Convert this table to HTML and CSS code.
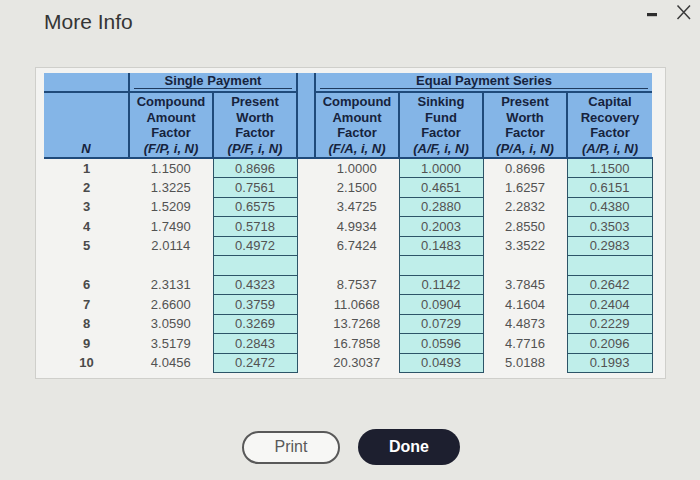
FILE: index.html
```html
<!DOCTYPE html>
<html lang="en">
<head>
<meta charset="utf-8">
<title>More Info</title>
<link rel="stylesheet" href="styles.css">
</head>
<body>
<div class="dialog">
  <header class="titlebar">
    <h1 class="title">More Info</h1>
    <div class="win-controls">
      <svg class="ctrl" width="16" height="16" viewBox="0 0 16 16" aria-label="Minimize"><rect x="2" y="9" width="10" height="3.2" fill="#2e2e2e"/></svg>
      <svg class="ctrl" width="16" height="16" viewBox="0 0 16 16" aria-label="Close"><path d="M1.5 1.5 L14 15 M14 1.5 L1.5 15" stroke="#3a3a3a" stroke-width="1.5" fill="none"/></svg>
    </div>
  </header>

  <div class="panel">
    <table class="factors">
      <colgroup>
        <col class="c-n"><col class="c-w"><col class="c-w"><col class="c-gap"><col class="c-w"><col class="c-w"><col class="c-w"><col class="c-last">
      </colgroup>
      <thead>
        <tr class="h1">
          <th class="hd hd-n"></th>
          <th class="hd group" colspan="2"><span class="group-label">Single Payment</span></th>
          <th class="hd gap" rowspan="2"></th>
          <th class="hd group" colspan="4"><span class="group-label">Equal Payment Series</span></th>
        </tr>
        <tr class="h2">
          <th class="hd sub"><i>N</i></th>
          <th class="hd sub">Compound<br>Amount<br>Factor<br><i>(F/P, i, N)</i></th>
          <th class="hd sub">Present<br>Worth<br>Factor<br><i>(P/F, i, N)</i></th>
          <th class="hd sub">Compound<br>Amount<br>Factor<br><i>(F/A, i, N)</i></th>
          <th class="hd sub">Sinking<br>Fund<br>Factor<br><i>(A/F, i, N)</i></th>
          <th class="hd sub">Present<br>Worth<br>Factor<br><i>(P/A, i, N)</i></th>
          <th class="hd sub">Capital<br>Recovery<br>Factor<br><i>(A/P, i, N)</i></th>
        </tr>
      </thead>
      <tbody>
        <tr><td class="n">1</td><td>1.1500</td><td class="hl">0.8696</td><td></td><td>1.0000</td><td class="hl">1.0000</td><td>0.8696</td><td class="hl">1.1500</td></tr>
        <tr><td class="n">2</td><td>1.3225</td><td class="hl">0.7561</td><td></td><td>2.1500</td><td class="hl">0.4651</td><td>1.6257</td><td class="hl">0.6151</td></tr>
        <tr><td class="n">3</td><td>1.5209</td><td class="hl">0.6575</td><td></td><td>3.4725</td><td class="hl">0.2880</td><td>2.2832</td><td class="hl">0.4380</td></tr>
        <tr><td class="n">4</td><td>1.7490</td><td class="hl">0.5718</td><td></td><td>4.9934</td><td class="hl">0.2003</td><td>2.8550</td><td class="hl">0.3503</td></tr>
        <tr><td class="n">5</td><td>2.0114</td><td class="hl">0.4972</td><td></td><td>6.7424</td><td class="hl">0.1483</td><td>3.3522</td><td class="hl">0.2983</td></tr>
        <tr><td class="n"></td><td></td><td class="hl"></td><td></td><td></td><td class="hl"></td><td></td><td class="hl"></td></tr>
        <tr><td class="n">6</td><td>2.3131</td><td class="hl">0.4323</td><td></td><td>8.7537</td><td class="hl">0.1142</td><td>3.7845</td><td class="hl">0.2642</td></tr>
        <tr><td class="n">7</td><td>2.6600</td><td class="hl">0.3759</td><td></td><td>11.0668</td><td class="hl">0.0904</td><td>4.1604</td><td class="hl">0.2404</td></tr>
        <tr><td class="n">8</td><td>3.0590</td><td class="hl">0.3269</td><td></td><td>13.7268</td><td class="hl">0.0729</td><td>4.4873</td><td class="hl">0.2229</td></tr>
        <tr><td class="n">9</td><td>3.5179</td><td class="hl">0.2843</td><td></td><td>16.7858</td><td class="hl">0.0596</td><td>4.7716</td><td class="hl">0.2096</td></tr>
        <tr><td class="n">10</td><td>4.0456</td><td class="hl">0.2472</td><td></td><td>20.3037</td><td class="hl">0.0493</td><td>5.0188</td><td class="hl">0.1993</td></tr>
      </tbody>
    </table>
  </div>

  <div class="actions">
    <button class="btn btn-print" type="button">Print</button>
    <button class="btn btn-done" type="button">Done</button>
  </div>
</div>
</body>
</html>
```

FILE: styles.css
```css
* { box-sizing: border-box; }

html, body {
  margin: 0;
  padding: 0;
  background: #e7e7e3;
}

body {
  font-family: "Liberation Sans", Arial, sans-serif;
  width: 700px;
  height: 480px;
  overflow: hidden;
}

.dialog {
  display: flex;
  flex-direction: column;
  width: 700px;
  height: 480px;
}

.titlebar {
  height: 67px;
  display: flex;
  justify-content: space-between;
  align-items: flex-start;
  padding: 0 8px 0 44px;
}

.title {
  margin: 10px 0 0 0;
  font-size: 21px;
  line-height: 24px;
  font-weight: normal;
  color: #353535;
}

.win-controls {
  display: flex;
  gap: 15px;
  margin-top: 4px;
}

.ctrl { display: block; }

.panel {
  margin-left: 35px;
  width: 631px;
  height: 312px;
  border: 1px solid #cfcfcb;
  background: #f3f3f1;
  padding: 5px 0 0 8px;
}

.factors {
  width: 608px;
  table-layout: fixed;
  border-collapse: collapse;
  font-size: 13px;
}

.c-n { width: 85px; }
.c-w { width: 84px; }
.c-last { width: 85px; }
.c-gap { width: 18px; }

.hd {
  background: #84b5e7;
  color: #16233d;
  font-weight: bold;
  padding: 0;
  border: 2px solid #1f4a7a;
}

.factors thead tr:first-child .hd { border-top: none; }
.factors thead .hd-n, .factors thead .h2 .sub:first-child { border-left: none; }
.factors thead .hd:last-child { border-right: none; }
.h2 .sub:last-child { border-right: none; }

.h1 { height: 19px; }
.h1 .group {
  vertical-align: bottom;
  padding: 0 4px 2px 4px;
}

.group-label {
  display: block;
  border-bottom: 1.5px solid #1f3a5e;
  line-height: 15px;
  font-size: 13px;
}

.h2 { height: 66px; }
.sub {
  vertical-align: bottom;
  line-height: 15.5px;
  padding-bottom: 1px;
  font-size: 13px;
}

.factors tbody tr { height: 19.5px; }

.factors td {
  padding: 0;
  text-align: center;
  color: #525252;
  line-height: 15px;
}

.factors td.n {
  font-weight: bold;
  color: #4a4a4a;
}

.factors td.hl {
  background: #bfeeea;
  border: 1.5px solid #2c5468;
}

.actions {
  display: flex;
  justify-content: center;
  align-items: center;
  gap: 18px;
  margin-top: 50px;
  padding-left: 2px;
}

.btn {
  font-family: "Liberation Sans", Arial, sans-serif;
  font-size: 16px;
  border-radius: 18px;
  cursor: pointer;
}

.btn-print {
  width: 98px;
  height: 33px;
  background: #f7f7f5;
  border: 2px solid #595959;
  color: #595959;
}

.btn-done {
  width: 102px;
  height: 36px;
  background: #1d1f2f;
  border: none;
  color: #fff;
  font-weight: bold;
}
```
